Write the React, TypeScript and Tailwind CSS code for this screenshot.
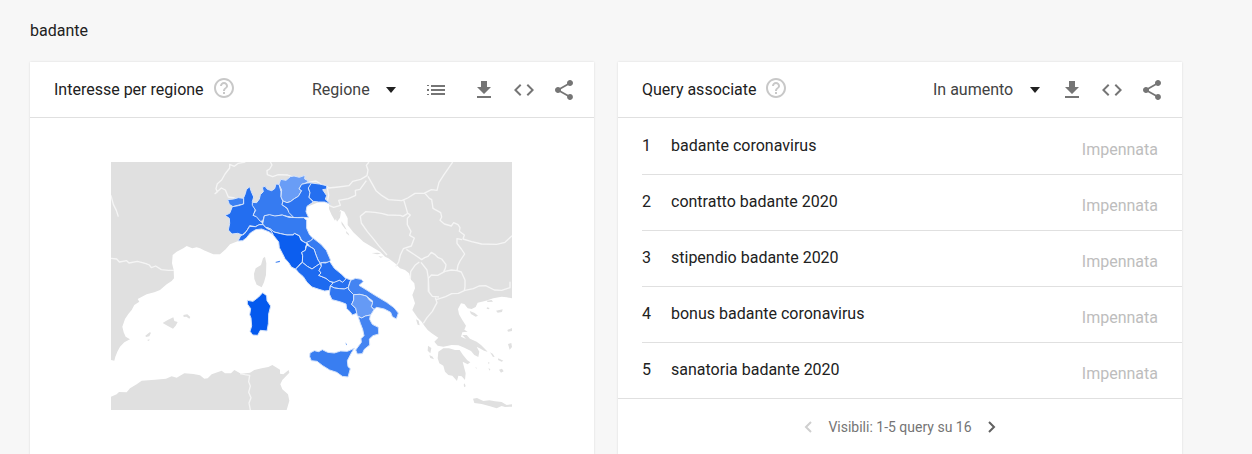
import React from "react";
import { MdCode, MdGetApp, MdHelpOutline, MdShare } from "react-icons/md";

const iconButton = "flex size-10 shrink-0 items-center justify-center text-[#757575]";

const queries = [
  "badante coronavirus",
  "contratto badante 2020",
  "stipendio badante 2020",
  "bonus badante coronavirus",
  "sanatoria badante 2020",
];

function ListIcon() {
  return (
    <svg viewBox="0 0 18 12" className="h-3 w-[18px]" fill="currentColor" aria-hidden="true">
      <path d="M0 1h2v1H0zM0 5h2v2H0zM0 10h2v1H0zM4 1h14v2H4zM4 5h14v2H4zM4 9h14v2H4z" />
    </svg>
  );
}

function Picker({ label, options, width }: { label: string; options: string[]; width: string }) {
  return (
    <div className={"relative flex items-center " + width}>
      <select
        aria-label={label}
        className="h-10 w-full cursor-pointer appearance-none bg-transparent text-base text-[#424242] outline-none"
      >
        {options.map((option) => (
          <option key={option}>{option}</option>
        ))}
      </select>
      <svg
        viewBox="0 0 10 6"
        className="pointer-events-none absolute right-0 h-1.5 w-2.5"
        fill="#212121"
        aria-hidden="true"
      >
        <path d="M0 0h10L5 6z" />
      </svg>
    </div>
  );
}

function CardHeader({ title, children }: { title: string; children: React.ReactNode }) {
  return (
    <header className="flex h-14 items-center border-b border-[#e0e0e0] pr-2.5 pl-6">
      <h2 className="text-base text-[#212121]">{title}</h2>
      <button type="button" aria-label="Guida" className="mb-1 ml-2 text-[#c8c8c8]">
        <MdHelpOutline size={24} />
      </button>
      <div className="ml-auto flex items-center">
        {children}
        <button type="button" aria-label="Scarica" className={iconButton}>
          <MdGetApp size={24} />
        </button>
        <button type="button" aria-label="Incorpora" className={iconButton}>
          <MdCode size={24} />
        </button>
        <button type="button" aria-label="Condividi" className={iconButton}>
          <MdShare size={24} />
        </button>
      </div>
    </header>
  );
}

const land = [
  // European mainland
  "M18 21H1221V430L1205 427 1190 425 1165 430 1140 438 1118 443 1112 456 1100 462 1088 460 1078 447 1068 445 1059 462 1062 478 1072 495 1083 512 1078 524 1088 530 1072 532 1068 545 1085 553 1105 565 1115 575 1123 590 1120 606 1108 600 1098 588 1078 578 1060 571 1040 570 1015 575 998 572 988 560 1000 548 980 535 968 525 958 512 950 500 938 488 922 465 930 445 922 420 930 400 928 385 918 374 912 355 900 345 885 340 870 325 850 310 840 305 825 290 800 275 775 260 745 232 728 210 728 190 718 170 706 165 690 197 680 180 672 162 672 148 660 140 640 142 620 150 595 160 560 175 470 200 440 210 415 238 400 258 375 268 362 283 345 298 325 298 300 287 285 280 275 277 262 280 245 273 235 280 215 290 203 300 201 325 206 345 207 370 200 378 185 388 165 405 148 412 125 418 108 427 98 432 103 440 88 450 80 465 70 477 60 492 52 515 56 532 62 545 75 553 58 562 45 575 37 590 31 605 28 617 18 615Z",
  // Peloponnese
  "M1000 590L1015 580 1032 580 1050 585 1064 585 1074 600 1087 616 1096 622 1088 628 1073 620 1078 640 1082 655 1080 675 1070 664 1060 662 1056 678 1042 662 1030 660 1020 650 1015 632 1003 625 998 610Z",
  // Euboea
  "M1072 540L1085 540 1095 551 1115 560 1128 570 1140 582 1148 590 1137 587 1124 580 1110 573 1092 562Z",
  // Crete
  "M1104 731L1116 729 1135 738 1153 736 1170 739 1190 741 1205 750 1221 748 1221 755 1200 756 1190 753 1175 760 1155 754 1130 747 1108 744Z",
  // Aegean and Ionian islands
  "M933 493l8 4 3 14-6-2z M969 572l10 7-3 16-8-8z M973 600l10 5 4 8-11-4z M1094 468l15 6 10 8-7 3-14-8z M1145 437l15-2 4 5-16 1z M1146 457l8 2-3 4-6-2z M1173 467l20-4-2 8-13 2z M1207 525l14-6v9l-12 2z M1209 567l10-3 2 12-7 8z M1110 443l5 1-2 6-5-3z M1155 592l8 4 6 9-5 1z M1180 610l15 7-5 3-11-5z M1182 644l9-3 5 8-8 4z M1149 621l5 2-3 5z M1079 685l3 9-4 3-2-8z M1150 640l6 2-2 5z M1111 637l4 1-1 4z",
  // Corsica
  "M480 305L484 325 483 360 477 382 470 397 455 389 448 372 447 356 452 340 468 330 474 310Z",
  // Balearic islands
  "M173 504L188 495 205 487 208 498 218 501 212 512 204 521 190 514Z M235 480l12-2 9 8-3 5-9-6-8 1z M121 542l13-10 4 1-5 11-10 2z M126 555l8-2-2 5z",
  // North Africa
  "M18 725L35 718 42 711 65 712 75 700 95 688 110 677 150 674 183 671 200 664 215 668 238 655 265 657 285 661 298 671 308 670 320 658 350 647 360 655 378 655 388 645 408 656 435 653 448 645 470 640 490 636 502 630 513 637 525 644 525 656 535 658 551 645 553 653 532 675 526 688 532 703 549 718 553 737 545 765 18 765Z",
  // Croatian islands
  "M693 193l7-22 8-2-3 19-9 12z M709 199l8 11 8 14-5-3-10-13z M800 294l16 4 12-2-9-3z M820 304l15 1-8 3z M723 228l8 8 2 6-9-7z",
];

const borders = [
  "M1 120L18 122 25 148 34 166 40 185",
  "M18 310L35 312 43 321 65 317 72 324 97 319 109 322 123 326 133 330 139 338 152 333 169 344 191 346 207 346",
  "M421 21L400 25 388 34 374 28 374 39 360 57 350 75 337 86 333 101 337 111 330 116 349 99 361 105 370 126 389 129",
  "M496 21L501 30 494 42 486 47 487 59 503 65 520 59 548 60 568 68",
  "M610 82L633 78 649 88 667 94 671 99 700 96 732 92 743 79 767 73 786 62 789 45 784 31 792 21",
  "M667 99L671 120 667 140 M789 64L813 107 831 122 850 134 890 137 908 129 930 115 957 115 979 104 996 106 1002 82 1017 59 1030 40 1043 21",
  "M784 77L765 103 751 106 752 121 730 131 701 136 706 151 686 157 671 151",
  "M896 134L904 161 908 175 894 184 886 181 848 180 829 175 810 172 782 170 766 184 769 204 787 230 804 250 821 272 846 300",
  "M909 175L916 180 907 190 907 209 918 229 914 241 928 249 919 273 895 281 886 300 881 321 872 335",
  "M960 115L973 130 980 134 984 160 1007 173 1010 186 1005 196 1018 207 1039 213 1046 203 1059 209 1065 218 1063 229 1078 240 1074 252 1100 260 1130 267 1175 268 1200 262 1221 242",
  "M1071 254L1056 251 1056 265 1069 282 1079 297 1065 318 1059 331 1056 347 1039 345 1020 349 998 361 979 360 970 370 972 411 982 424 1002 426",
  "M904 283L930 300 950 314 959 308 969 304 979 292 989 298 998 307 1010 312 1023 329 1021 340 1016 350",
  "M943 321L930 331 917 350 916 372 M948 322L966 345 970 370 970 410",
  "M991 428L996 443 982 469 966 488 955 505 M994 434L1022 425 1040 416 1060 415 1078 407 1080 395 1080 375 1069 351 1056 347 M1080 406L1105 401 1122 393 1142 392 1168 405 1190 406 1215 398 1215 380",
  "M405 656L420 659 434 661 431 680 436 693 431 712 438 728 432 744 436 765",
];

const regions: { name: string; fill: string; d: string }[] = [
  { name: "Valle d'Aosta", fill: "#3b80f2", d: "M368 134L386 132 400 128 416 130 416 147 398 151 384 155 373 148Z" },
  {
    name: "Piemonte",
    fill: "#236ef0",
    d: "M416 128L421 116 424 104 434 95 439 110 446 126 442 140 453 154 450 166 445 181 456 185 468 199 474 207 460 211 451 215 434 212 425 228 412 240 398 235 381 237 370 225 374 205 373 190 360 181 374 175 382 155 400 152 416 147Z",
  },
  {
    name: "Liguria",
    fill: "#226cf0",
    d: "M399 258L407 242 417 238 425 228 434 214 452 215 462 209 475 209 485 220 500 227 507 242 493 231 470 222 452 224 436 234 424 249 413 257Z",
  },
  {
    name: "Lombardia",
    fill: "#367bf1",
    d: "M442 142L455 143 463 132 466 119 475 110 472 97 480 94 487 103 500 107 509 101 513 87 522 88 528 110 528 124 534 140 531 149 546 160 554 173 567 188 547 184 530 180 509 184 492 180 478 183 473 198 466 199 454 185 444 181 452 166 442 151Z",
  },
  {
    name: "Trentino-Alto Adige",
    fill: "#699df6",
    d: "M527 73L543 76 556 65 567 63 583 67 600 61 599 72 611 78 602 84 590 88 582 102 590 107 580 124 568 131 556 140 545 143 534 138 528 126 530 105 522 88Z",
  },
  {
    name: "Veneto",
    fill: "#2c74f1",
    d: "M590 88L606 84 620 83 621 92 610 100 615 113 612 127 625 141 606 154 603 170 611 188 592 187 567 188 552 173 547 160 531 149 534 138 546 143 556 140 568 131 580 124 590 107 582 102Z",
  },
  {
    name: "Friuli-Venezia Giulia",
    fill: "#246ff0",
    d: "M619 84L643 87 665 92 665 102 653 104 665 122 661 132 667 138 676 147 659 141 641 141 625 139 612 127 615 113 610 99Z",
  },
  {
    name: "Emilia-Romagna",
    fill: "#357bf1",
    d: "M478 182L494 179 510 183 532 180 551 187 577 188 596 188 605 196 605 220 614 240 624 250 614 262 602 264 590 256 583 242 568 235 565 240 546 240 527 236 507 231 495 221 482 217 473 207Z",
  },
  {
    name: "Toscana",
    fill: "#0c5eef",
    d: "M483 217L495 221 507 231 527 236 546 240 565 240 568 235 583 243 588 256 606 266 602 275 601 286 590 292 593 302 592 322 587 325 578 336 571 342 559 336 551 323 540 311 532 295 523 278 521 261 506 242 497 225Z",
  },
  {
    name: "Marche",
    fill: "#367bf1",
    d: "M605 262L617 257 625 250 648 268 664 286 677 316 670 322 654 322 646 325 639 315 633 300 627 282 614 274Z",
  },
  {
    name: "Umbria",
    fill: "#1b68ef",
    d: "M605 270L613 274 627 282 633 300 639 315 646 325 634 333 621 342 607 334 592 322 593 302 590 292 601 286Z",
  },
  {
    name: "Lazio",
    fill: "#1d6af0",
    d: "M572 342L585 329 592 322 607 334 621 342 634 333 646 325 649 334 642 346 648 354 641 361 663 370 674 379 685 383 676 393 674 406 659 408 642 403 621 396 606 382 595 365 581 353Z",
  },
  {
    name: "Abruzzo",
    fill: "#236ef0",
    d: "M648 323L662 324 674 319 688 340 710 358 724 372 713 382 703 376 690 383 674 379 663 370 641 361 648 354 642 346 649 334Z",
  },
  {
    name: "Molise",
    fill: "#2770f0",
    d: "M724 370L737 375 734 383 730 397 718 402 704 401 689 399 676 393 685 383 703 376 713 382Z",
  },
  {
    name: "Campania",
    fill: "#2f76f1",
    d: "M676 393L689 399 704 401 718 402 730 397 732 405 746 419 746 435 740 448 752 460 757 474 742 480 735 470 725 461 723 447 710 442 697 438 681 434 673 417Z",
  },
  {
    name: "Puglia",
    fill: "#4484f2",
    d: "M737 376L752 370 769 373 775 380 762 391 780 402 810 421 845 442 867 458 880 474 874 492 862 485 857 472 838 462 815 457 807 463 799 455 803 438 784 423 765 418 746 419 732 405 730 397Z",
  },
  {
    name: "Basilicata",
    fill: "#659af5",
    d: "M746 419L765 418 784 423 794 436 803 442 799 455 807 464 797 480 781 483 770 489 757 482 752 460 740 448 746 435Z",
  },
  {
    name: "Calabria",
    fill: "#4484f2",
    d: "M759 484L770 489 781 483 796 480 794 493 802 508 820 517 821 537 804 542 793 552 794 570 778 583 772 596 757 597 752 585 769 562 768 551 777 542 773 523 766 505Z",
  },
  {
    name: "Sicilia",
    fill: "#397ef1",
    d: "M615 594L628 587 641 590 652 584 668 592 688 594 707 588 727 589 748 580 739 594 727 617 729 635 736 641 729 666 712 664 695 652 674 645 653 632 636 619 619 617 614 605Z",
  },
  {
    name: "Sardegna",
    fill: "#0459ee",
    d: "M427 436L444 439 461 426 473 413 485 422 486 437 497 453 491 477 490 506 486 528 466 526 458 541 443 540 435 529 440 513 438 489 434 479 437 461 427 447Z",
  },
];

function ItalyMap() {
  return (
    <svg
      viewBox="18 21 1206 744"
      className="block w-full max-w-[402px]"
      role="img"
      aria-label="Mappa dell'interesse per regione in Italia"
    >
      <path d={land.join(" ")} fill="#e0e0e0" />
      <path d={borders.join(" ")} fill="none" stroke="#f5f5f5" strokeWidth="4" strokeLinejoin="round" />
      {regions.map((region) => (
        <path
          key={region.name}
          d={region.d}
          fill={region.fill}
          stroke="#d5e3fb"
          strokeWidth="3"
          strokeLinejoin="round"
        />
      ))}
      <path d="M511 321l13-4 1 4-12 2z M722 562l4 9-3-2z" fill="#397ef1" />
    </svg>
  );
}

export default function App() {
  return (
    <main
      className="flex min-h-screen flex-col bg-[#f7f7f7] pr-[70px] pl-[30px]"
      style={{ fontFamily: 'Roboto, "Liberation Sans", sans-serif' }}
    >
      <h1 className="pt-[19px] pb-[19px] text-base text-[#212121]">badante</h1>
      <div className="grid flex-1 grid-cols-2 gap-6">
        <section className="bg-white shadow-[0_0_2px_rgba(0,0,0,0.12)]">
          <CardHeader title="Interesse per regione">
            <Picker label="Suddivisione" options={["Regione", "Città"]} width="mr-5 w-[84px]" />
            <button type="button" aria-label="Elenco" className={iconButton + " mr-2"}>
              <ListIcon />
            </button>
          </CardHeader>
          <div className="flex justify-center px-6 pt-11">
            <ItalyMap />
          </div>
        </section>
        <section className="flex flex-col bg-white shadow-[0_0_2px_rgba(0,0,0,0.12)]">
          <CardHeader title="Query associate">
            <Picker label="Ordinamento" options={["In aumento", "Più cercate"]} width="mr-3 w-[107px]" />
          </CardHeader>
          <ol className="pt-px">
            {queries.map((query, index) => (
              <li
                key={query}
                className={
                  "flex h-14 items-center border-b border-[#e0e0e0] pr-6 pb-0.5 " +
                  (index === queries.length - 1 ? "pl-6" : "ml-6")
                }
              >
                <span className="w-[29px] text-base text-[#212121]">{index + 1}</span>
                <a href="#" className="flex-1 text-base text-[#212121]">
                  {query}
                </a>
                <span className="pt-2 text-base text-[#bdbdbd]">Impennata</span>
              </li>
            ))}
          </ol>
          <nav aria-label="Pagine" className="flex h-14 items-center justify-center gap-2 text-sm text-[#757575]">
            <button type="button" aria-label="Pagina precedente" disabled className="p-2 text-[#cfcfcf]">
              <svg viewBox="0 0 8 12" className="h-3 w-2" fill="none" stroke="currentColor" strokeWidth="2" aria-hidden="true">
                <path d="M7 1L2 6l5 5" />
              </svg>
            </button>
            <span>Visibili: 1-5 query su 16</span>
            <button type="button" aria-label="Pagina successiva" className="p-2 text-[#616161]">
              <svg viewBox="0 0 8 12" className="h-3 w-2" fill="none" stroke="currentColor" strokeWidth="2" aria-hidden="true">
                <path d="M1 1l5 5-5 5" />
              </svg>
            </button>
          </nav>
        </section>
      </div>
    </main>
  );
}
